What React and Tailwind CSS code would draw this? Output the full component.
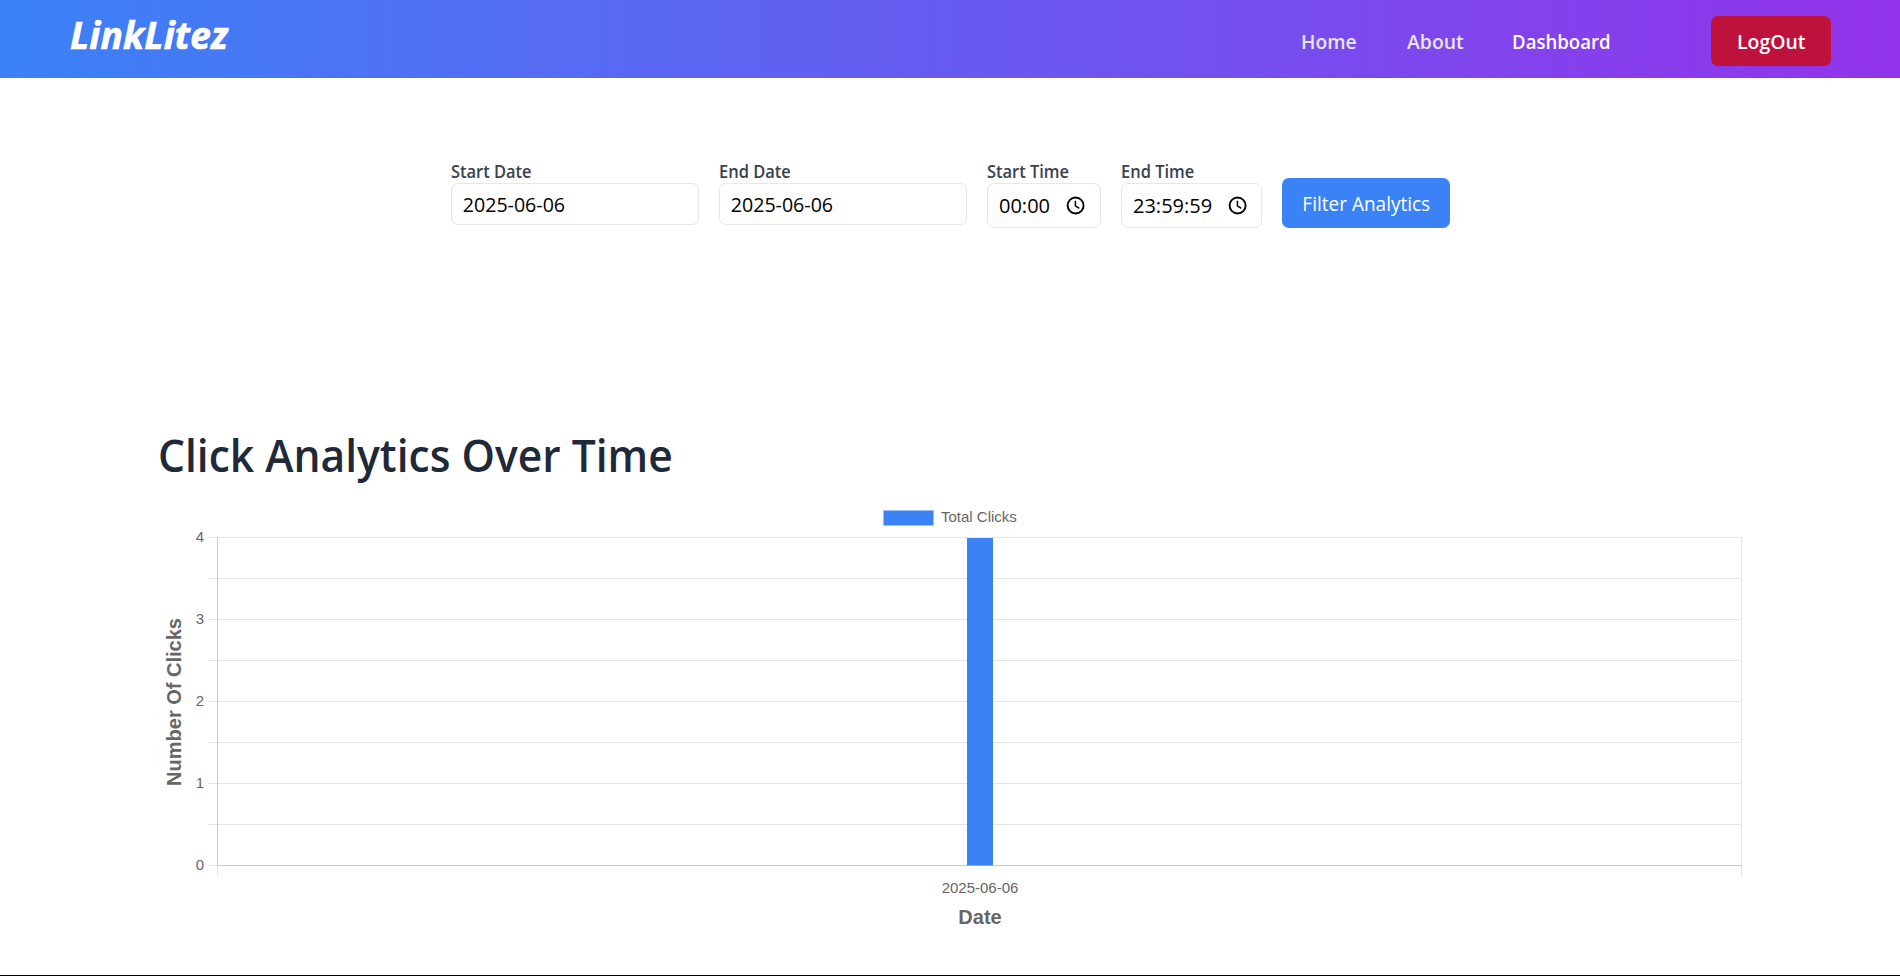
import React from "react";

const GRID_ROWS = [537.5, 578.5, 619.5, 660.5, 701.5, 742.5, 783.5, 824.5];
const TICKS = [
  { label: "4", y: 542 },
  { label: "3", y: 624 },
  { label: "2", y: 706 },
  { label: "1", y: 788 },
  { label: "0", y: 870 },
];

function Navbar() {
  return (
    <header className="flex h-[78px] bg-linear-to-r/srgb from-[#3b82f6] to-[#9333ea] pr-[69px] pl-[70px] text-white">
      <h1 className="mt-[10px] text-[37px] leading-[50px] font-bold italic tracking-[0.2px] [-webkit-text-stroke:0.7px_white]">
        LinkLitez
      </h1>
      <nav className="ml-auto flex pt-[28px] text-[20px] leading-[28px] font-semibold">
        <a className="w-[106px] origin-left scale-x-96 text-gray-200">Home</a>
        <a className="w-[105px] origin-left scale-x-97 text-gray-200">About</a>
        <a className="w-[199px] origin-left scale-x-93">Dashboard</a>
      </nav>
      <button className="mt-[16px] h-[50px] w-[120px] rounded-[7px] bg-[#be123c] pt-[2px] text-[20px] leading-[28px] font-semibold">
        <span className="inline-block scale-x-97">LogOut</span>
      </button>
    </header>
  );
}

function ClockIcon() {
  return (
    <svg width="20" height="20" viewBox="0 0 20 20" fill="none" stroke="#000">
      <circle cx="9.6" cy="9.5" r="8" strokeWidth="1.9" />
      <path d="M9.4 4.7V9.9L13.3 12.4" strokeWidth="1.5" />
    </svg>
  );
}

function Field({ label, width, height, children }) {
  return (
    <div className="flex flex-col" style={{ width }}>
      <label className="h-[22px] origin-left scale-x-94 text-[17.5px] leading-[20px] font-semibold whitespace-nowrap text-[#374151]">
        {label}
      </label>
      <div
        className="flex items-center rounded-[7px] border border-gray-200 text-[20px] leading-[28px] whitespace-nowrap text-black"
        style={{ height }}
      >
        {children}
      </div>
    </div>
  );
}

function Filters() {
  return (
    <section className="mt-[83px] flex h-[67px] items-start gap-[20px] pl-[451px]">
      <Field label="Start Date" width={248} height={42}>
        <span className="origin-left scale-x-98 pt-[1px] pl-[11px]">2025-06-06</span>
      </Field>
      <Field label="End Date" width={248} height={42}>
        <span className="origin-left scale-x-98 pt-[1px] pl-[11px]">2025-06-06</span>
      </Field>
      <Field label="Start Time" width={114} height={45}>
        <span className="w-[78px] pl-[11px]">00:00</span>
        <ClockIcon />
      </Field>
      <Field label="End Time" width={141} height={45}>
        <span className="w-[106px] pl-[11px]">23:59:59</span>
        <ClockIcon />
      </Field>
      <button className="mt-[17px] h-[50px] w-[168px] rounded-[7px] bg-[#3b82f6] pt-[1px] text-[20px] leading-[28px] whitespace-nowrap text-white">
        <span className="inline-block scale-x-95">Filter Analytics</span>
      </button>
    </section>
  );
}

function ClicksChart() {
  return (
    <svg
      className="block"
      width="1900"
      height="475"
      viewBox="0 500 1900 475"
      fontFamily="'Liberation Sans', Arial, sans-serif"
      fontSize="15"
      fill="#666666"
    >
      <rect x="883.5" y="510.5" width="50" height="15" fill="#3b82f6" stroke="#9dc1fb" />
      <text x="941" y="522">Total Clicks</text>
      {GRID_ROWS.map((y) => (
        <line key={y} x1="208" x2="1742" y1={y} y2={y} stroke="#e5e5e5" />
      ))}
      <line x1="208" x2="217" y1="865.5" y2="865.5" stroke="#e5e5e5" />
      <line x1="1741.5" x2="1741.5" y1="537" y2="876" stroke="#e5e5e5" />
      <line x1="217.5" x2="217.5" y1="866" y2="876" stroke="#e5e5e5" />
      <line x1="217.5" x2="217.5" y1="537" y2="866" stroke="#cccccc" />
      <line x1="217" x2="1742" y1="865.5" y2="865.5" stroke="#cccccc" />
      <rect x="967" y="538" width="26" height="327.5" fill="#3b82f6" />
      {TICKS.map((tick) => (
        <text key={tick.label} x="204" y={tick.y} textAnchor="end">
          {tick.label}
        </text>
      ))}
      <text x="980" y="893" textAnchor="middle">2025-06-06</text>
      <text x="980" y="923.5" textAnchor="middle" fontSize="20" fontWeight="700">Date</text>
      <text transform="translate(181 702) rotate(-90)" textAnchor="middle" fontSize="20" fontWeight="700">
        Number Of Clicks
      </text>
    </svg>
  );
}

export default function App() {
  return (
    <div className="flex h-[976px] w-[1900px] flex-col overflow-hidden border-b border-black bg-white font-['Open_Sans','Noto_Sans',sans-serif]">
      <Navbar />
      <Filters />
      <main className="mt-[192px]">
        <h2 className="ml-[158px] h-[80px] w-[700px] origin-left scale-x-[0.946] pt-[4px] text-[45px] leading-[62px] font-semibold text-[#1f2937]">
          Click Analytics Over Time
        </h2>
        <ClicksChart />
      </main>
    </div>
  );
}
